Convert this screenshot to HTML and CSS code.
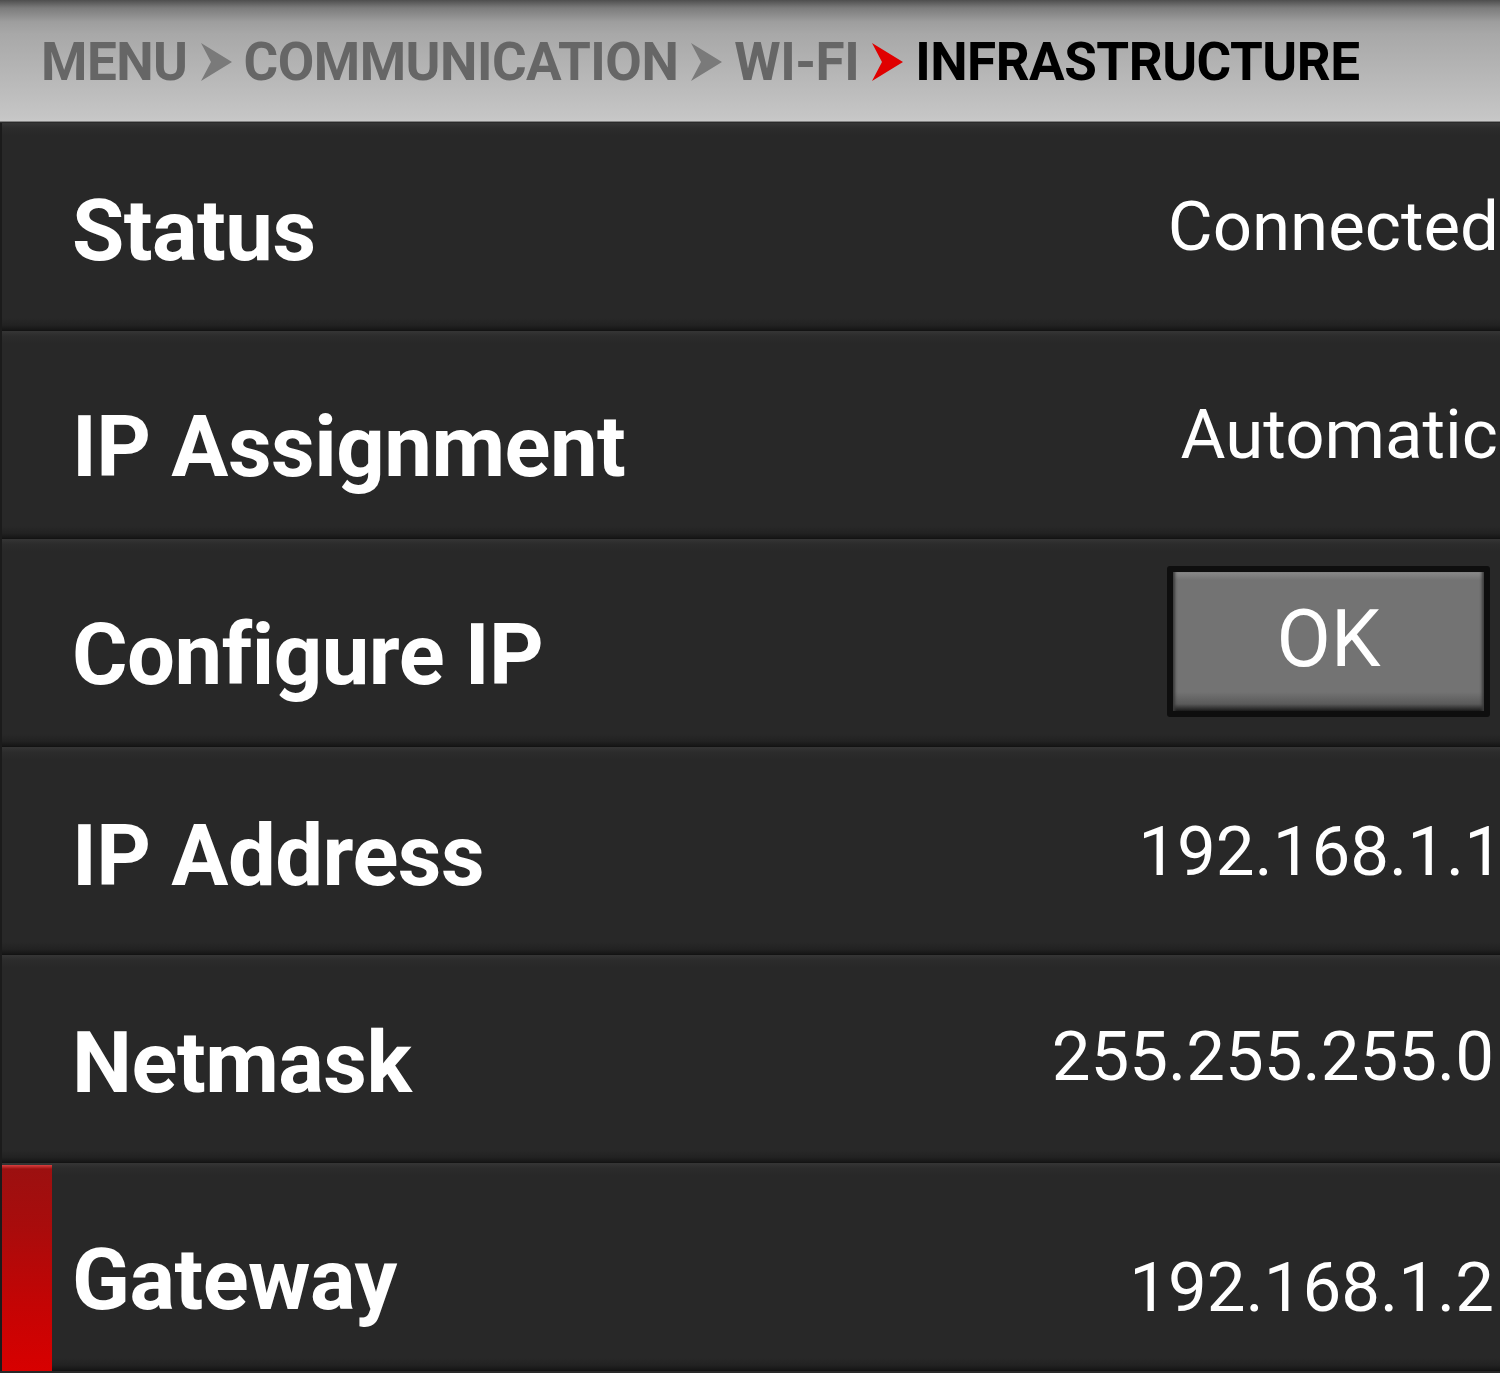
FILE: index.html
```html
<!DOCTYPE html>
<html>
<head>
<meta charset="utf-8">
<link rel="stylesheet" href="styles.css">
</head>
<body>
<div class="screen">
  <header class="crumbs">
    <span class="crumb">MENU</span>
    <svg class="sep" viewBox="0 0 32 38"><path d="M1 0 L32 19 L1 38 L11 19 Z" fill="#7a7a7a"/></svg>
    <span class="crumb">COMMUNICATION</span>
    <svg class="sep" viewBox="0 0 32 38"><path d="M1 0 L32 19 L1 38 L11 19 Z" fill="#7a7a7a"/></svg>
    <span class="crumb">WI-FI</span>
    <svg class="sep" viewBox="0 0 32 38"><path d="M1 0 L32 19 L1 38 L11 19 Z" fill="#e00000"/></svg>
    <span class="crumb current">INFRASTRUCTURE</span>
  </header>
  <div class="list">
    <div class="row r1"><span class="label">Status</span><span class="value">Connected</span></div>
    <div class="row r2"><span class="label">IP Assignment</span><span class="value">Automatic</span></div>
    <div class="row r3"><span class="label">Configure IP</span><button class="ok">OK</button></div>
    <div class="row r4"><span class="label">IP Address</span><span class="value">192.168.1.1</span></div>
    <div class="row r5"><span class="label">Netmask</span><span class="value">255.255.255.0</span></div>
    <div class="row r6 selected"><span class="label">Gateway</span><span class="value">192.168.1.2</span></div>
  </div>
</div>
</body>
</html>
```
FILE: styles.css
```css
html, body {
  margin: 0;
  padding: 0;
  background: #282828;
}
.screen {
  width: 1500px;
  height: 1373px;
  overflow: hidden;
  display: flex;
  flex-direction: column;
  font-family: Roboto, "Liberation Sans", sans-serif;
}
.crumbs {
  height: 123px;
  box-sizing: border-box;
  flex: none;
  display: flex;
  align-items: center;
  padding: 0 0 0 41px;
  gap: 12px;
  background: linear-gradient(to bottom, #4e4e4e 0px, #7c7c7c 8px, #9e9e9e 22px, #a8a8a8 34px, #c6c6c6 118px, #c9c9c9 121px, #3a3a3a 122px, #1a1a1a 123px);
}
.crumb {
  font-weight: 700;
  font-size: 53px;
  color: #666666;
  letter-spacing: -0.5px;
  line-height: 1;
  padding-top: 2px;
}
.crumb.current {
  color: #000;
}
.sep {
  width: 32px;
  height: 38px;
  flex: none;
}
.list {
  display: flex;
  flex-direction: column;
  flex: 1;
}
.row {
  height: 208px;
  flex: none;
  box-sizing: border-box;
  display: flex;
  align-items: center;
  justify-content: space-between;
  position: relative;
  background: linear-gradient(to bottom, #353535 0px, #2c2c2c 5px, #282828 12px, #282828 195px, #222 202px, #161616 207px, #101010 208px);
  border-left: 2px solid #1b1b1b;
  padding-left: 70px;
  overflow: hidden;
}
.label {
  color: #fff;
  font-weight: 700;
  font-size: 85px;
  letter-spacing: -0.5px;
  line-height: 1;
}
.value {
  color: #fff;
  font-weight: 400;
  font-size: 69px;
  line-height: 1;
  white-space: nowrap;
  margin-right: 0;
}
.r1 .label { margin-top: 8px; }
.r1 .value { margin-top: -2px; margin-right: 1px; }
.r2 .label { margin-top: 24px; }
.r2 .value { margin-top: -2px; margin-right: 2px; }
.r3 .label { margin-top: 24px; }
.r4 .label { margin-top: 10px; }
.r4 .value { margin-top: 0px; margin-right: -3px; }
.r5 .label { margin-top: 8px; }
.r5 .value { margin-top: -6px; margin-right: 6px; }
.r6 .label { margin-top: 26px; }
.r6 .value { margin-top: 40px; margin-right: 6px; }
.selected::before {
  content: "";
  position: absolute;
  left: -2px;
  top: 2px;
  bottom: 0;
  width: 52px;
  background: linear-gradient(to bottom, #d84040 0px, #9c1010 4px, #a80c0c 60px, #c40404 140px, #d80000 208px);
}
.ok {
  width: 323px;
  height: 151px;
  margin-right: 10px;
  margin-top: -4px;
  box-sizing: border-box;
  border: 6px solid #0e0e0e;
  border-radius: 3px;
  background: linear-gradient(to bottom, #8a8a8a 0px, #737373 8px, #737373 120px, #5a5a5a 132px, #1a1a1a 139px);
  color: #fff;
  font-family: Roboto, "Liberation Sans", sans-serif;
  font-weight: 400;
  font-size: 79px;
  line-height: 1;
  padding: 0 0 4px 0;
  box-shadow: inset 4px 0 3px -2px #3a3a3a, inset -4px 0 3px -2px #3a3a3a;
}
```
